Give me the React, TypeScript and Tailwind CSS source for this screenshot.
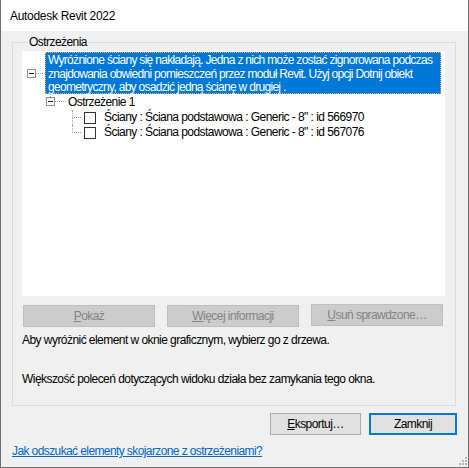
import React from "react";

function CollapseBox() {
  return (
    <div className="w-[9px] h-[9px] border border-[#919191] bg-white flex items-center justify-center shrink-0">
      <div className="w-[5px] h-px bg-[#222]" />
    </div>
  );
}

function ChildRow({ text, last }: { text: string; last?: boolean }) {
  return (
    <div className="flex h-[15px] items-stretch">
      <div className="w-[9px] flex flex-col shrink-0">
        <div className="h-[8px] border-l border-b border-dotted border-[#a0a0a0]" />
        {!last && <div className="flex-1 border-l border-dotted border-[#a0a0a0]" />}
      </div>
      <div className="ml-[3px] mt-[2px] w-[12px] h-[12px] border border-[#333] bg-white shrink-0" />
      <div className="ml-[8px] leading-[15px] whitespace-nowrap">{text}</div>
    </div>
  );
}

export default function App() {
  return (
    <div className="w-[469px] h-[468px] bg-[#f0f0f0] border-x border-b border-[#6e6e6e] flex flex-col text-[12px] tracking-[-0.55px] text-black font-['Liberation_Sans',Arial,sans-serif] overflow-hidden">
      <div className="h-[31px] bg-white flex items-center pl-[9px] shrink-0 tracking-[-0.3px]">Autodesk Revit 2022</div>

      <fieldset className="mt-[4px] ml-[11px] mr-[12px] border border-[#dcdcdc] pl-[9px] pr-[10px] pb-[18px] shrink-0">
        <legend className="ml-[6px] px-[1px] leading-[15px]">Ostrzeżenia</legend>

        <div className="mt-[1px] h-[245px] bg-white pt-[1px]">
          {/* root item */}
          <div className="flex items-center h-[42px]">
            <div className="ml-[5px]">
              <CollapseBox />
            </div>
            <div className="w-[9px] border-t border-dotted border-[#a0a0a0]" />
            <div className="w-[396px] h-[42px] bg-[#0078d7] text-white border border-dotted border-[#f3b24a] pl-[2px] leading-[13.5px] pt-px tracking-[-0.7px]">
              <div className="whitespace-nowrap">Wyróżnione ściany się nakładają. Jedna z nich może zostać zignorowana podczas</div>
              <div className="whitespace-nowrap">znajdowania obwiedni pomieszczeń przez moduł Revit. Użyj opcji Dotnij obiekt</div>
              <div className="whitespace-nowrap">geometryczny, aby osadzić jedną ścianę w drugiej .</div>
            </div>
          </div>

          {/* Ostrzezenie 1 */}
          <div className="flex h-[16px] ml-[24px]">
            <div className="w-[9px] flex flex-col items-center shrink-0">
              <div className="h-[3px] border-l border-dotted border-[#a0a0a0]" />
              <CollapseBox />
            </div>
            <div className="w-[11px] h-[8px] border-b border-dotted border-[#a0a0a0]" />
            <div className="ml-[2px] leading-[16px] whitespace-nowrap">Ostrzeżenie 1</div>
          </div>

          {/* children */}
          <div className="ml-[50px]">
            <ChildRow text={'Ściany : Ściana podstawowa : Generic - 8" : id 566970'} />
            <ChildRow text={'Ściany : Ściana podstawowa : Generic - 8" : id 567076'} last />
          </div>
        </div>

        <div className="mt-[9px] flex gap-[12px] pl-[1px]">
          <div className="w-[132px] h-[22px] bg-[#cccccc] border border-[#bfbfbf] text-[#838383] flex items-center justify-center">
            <span><span className="underline">P</span>okaż</span>
          </div>
          <div className="w-[132px] h-[22px] bg-[#cccccc] border border-[#bfbfbf] text-[#838383] flex items-center justify-center">
            <span><span className="underline">W</span>ięcej informacji</span>
          </div>
          <div className="w-[132px] h-[22px] bg-[#cccccc] border border-[#bfbfbf] text-[#838383] flex items-center justify-center -mt-px">
            <span><span className="underline">U</span>suń sprawdzone…</span>
          </div>
        </div>

        <div className="mt-[6px] leading-[15px] whitespace-nowrap">Aby wyróżnić element w oknie graficznym, wybierz go z drzewa.</div>
        <div className="mt-[24px] leading-[15px] whitespace-nowrap">Większość poleceń dotyczących widoku działa bez zamykania tego okna.</div>
      </fieldset>

      <div className="mt-[7px] mr-[11px] flex justify-end gap-[8px] shrink-0">
        <div className="w-[91px] h-[22px] bg-[#e1e1e1] border border-[#adadad] flex items-center justify-center">
          <span><span className="underline">E</span>ksportuj…</span>
        </div>
        <div className="w-[88px] h-[22px] bg-[#e1e1e1] border-2 border-[#0078d7] flex items-center justify-center">
          Zamknij
        </div>
      </div>

      <div className="flex-1 flex justify-between pl-[11px] pr-[1px] pb-[2px]">
        <div className="mt-[9px] leading-[15px] text-[#0066cc] underline whitespace-nowrap tracking-[-0.6px]">Jak odszukać elementy skojarzone z ostrzeżeniami?</div>
        <svg width="8" height="8" viewBox="0 0 8 8" className="self-end">
          <rect x="6" y="0" width="2" height="2" fill="#b4b4b4" />
          <rect x="3" y="3" width="2" height="2" fill="#b4b4b4" />
          <rect x="6" y="3" width="2" height="2" fill="#b4b4b4" />
          <rect x="0" y="6" width="2" height="2" fill="#b4b4b4" />
          <rect x="3" y="6" width="2" height="2" fill="#b4b4b4" />
          <rect x="6" y="6" width="2" height="2" fill="#b4b4b4" />
        </svg>
      </div>
    </div>
  );
}
